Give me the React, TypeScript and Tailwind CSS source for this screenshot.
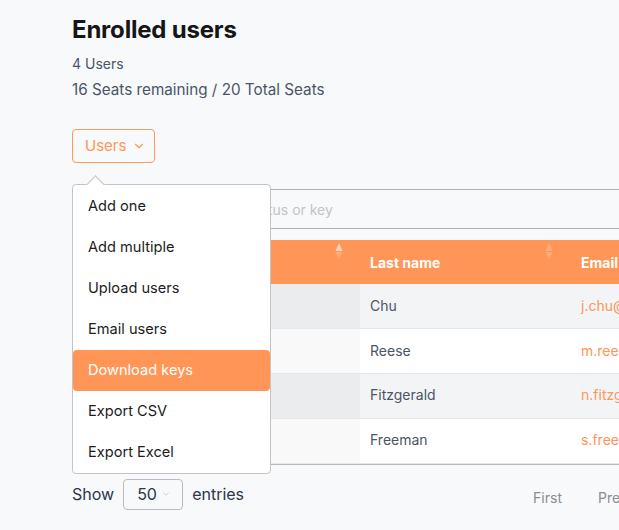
import { ChevronDown } from "lucide-react";

const menuItems = [
    "Add one",
    "Add multiple",
    "Upload users",
    "Email users",
    "Download keys",
    "Export CSV",
    "Export Excel",
];

const rows = [
    { last: "Chu", email: "j.chu@example.com" },
    { last: "Reese", email: "m.reese@example.com" },
    { last: "Fitzgerald", email: "n.fitzgerald@example.com" },
    { last: "Freeman", email: "s.freeman@example.com" },
];

function SortIcon({ active }: { active?: boolean }) {
    return (
        <svg width="10" height="18" viewBox="0 0 10 18" className="shrink-0">
            <path d="M5 0 L8.5 8 H1.5 Z" fill="#ffffff" opacity={active ? 0.6 : 0.2} />
            <path d="M1.5 9 H8.5 L5 17 Z" fill="#ffffff" opacity={0.2} />
        </svg>
    );
}

export default function App() {
    return (
        <div className="min-h-[530px] w-[619px] overflow-hidden bg-[#f8f9fb] font-['Inter',sans-serif]">
            <div className="w-[760px] pl-[72px] pt-[14px]">
                <h1 className="text-2xl leading-8 font-bold text-[#161616] tracking-[-0.2px]">
                    Enrolled users
                </h1>
                <p className="mt-[5px] text-[14px] leading-[26px] text-[#4a5566]">4 Users</p>
                <p className="text-[15.25px] leading-[26px] text-[#4a5566]">
                    16 Seats remaining / 20 Total Seats
                </p>

                <div className="relative mt-[26px] w-fit">
                    <button className="flex h-[34px] w-[83px] items-center gap-[6px] rounded border border-[#ff9a5c] pl-[12px] text-[15px] text-[#ff9657]">
                        Users
                        <ChevronDown className="h-[14px] w-[14px]" strokeWidth={2} />
                    </button>

                    <div className="absolute left-0 top-[55px] z-10 w-[199px] rounded border border-[#c4c4c4] bg-white">
                        <div className="absolute -top-[7px] left-[16px] h-[13px] w-[13px] rotate-45 border-l border-t border-[#c4c4c4] bg-white" />
                        <ul className="relative pt-[1px]">
                            {menuItems.map((item) => (
                                <li
                                    key={item}
                                    className={
                                        item === "Download keys"
                                            ? "flex h-[41px] items-center rounded bg-[#ff9657] pl-[15px] text-[14.6px] text-white"
                                            : "flex h-[41px] items-center pl-[15px] text-[14.6px] text-[#1c1c1c]"
                                    }
                                >
                                    {item}
                                </li>
                            ))}
                        </ul>
                    </div>
                </div>

                <div className="mt-[26px] flex h-[40px] items-center border border-[#aeb0b3] bg-[#f8f9fb] pl-[17px] text-[14px] text-[#c2c4c8]">
                    Search by name, email, status or key
                </div>

                <table className="mt-[11px] w-full border-collapse text-[14px]">
                    <thead>
                        <tr className="h-[44px] bg-[#ff9657] text-left font-semibold text-white">
                            <th className="w-[288px] pr-[16px] pl-[10px] align-top">
                                <div className="flex justify-between pt-[3px]">
                                    <span className="pt-[9px]">First name</span>
                                    <SortIcon active />
                                </div>
                            </th>
                            <th className="w-[210px] pl-[10px] pr-[16px] align-top">
                                <div className="flex justify-between pt-[3px]">
                                    <span className="pt-[9px]">Last name</span>
                                    <SortIcon />
                                </div>
                            </th>
                            <th className="pl-[11px] align-top">
                                <div className="pt-[12px]">Email</div>
                            </th>
                        </tr>
                    </thead>
                    <tbody className="text-[#4b5563]">
                        {rows.map((row, i) => (
                            <tr
                                key={row.last}
                                className={
                                    i % 2 === 0
                                        ? "h-[44.75px] border-b border-[#e5e7eb] bg-[#f3f4f6]"
                                        : "h-[44.75px] border-b border-[#e5e7eb] bg-white"
                                }
                            >
                                <td className={i % 2 === 0 ? "bg-[#ebecee]" : "bg-[#f9f9f9]"} />
                                <td className="pb-[2px] pl-[10px]">{row.last}</td>
                                <td className="pb-[2px] pl-[11px] text-[#ff9657]">{row.email}</td>
                            </tr>
                        ))}
                    </tbody>
                </table>
                <div className="h-px bg-[#b5b7ba]" />

                <div className="mt-[14px] flex items-center text-[16px] text-[#2b3648]">
                    <span>Show</span>
                    <div className="ml-[9px] flex h-[31px] w-[60px] items-center gap-[4px] rounded border border-[#b8bbbf] bg-[#f8f9fb] pl-[13px]">
                        <span>50</span>
                        <ChevronDown className="h-[10px] w-[10px] text-[#c4c6ca]" strokeWidth={2} />
                    </div>
                    <span className="ml-[9px]">entries</span>
                    <span className="ml-[289px] mt-[6px] text-[14px] text-[#8a8d92]">First</span>
                    <span className="ml-[36px] mt-[6px] text-[14px] text-[#8a8d92]">Previous</span>
                </div>
            </div>
        </div>
    );
}
